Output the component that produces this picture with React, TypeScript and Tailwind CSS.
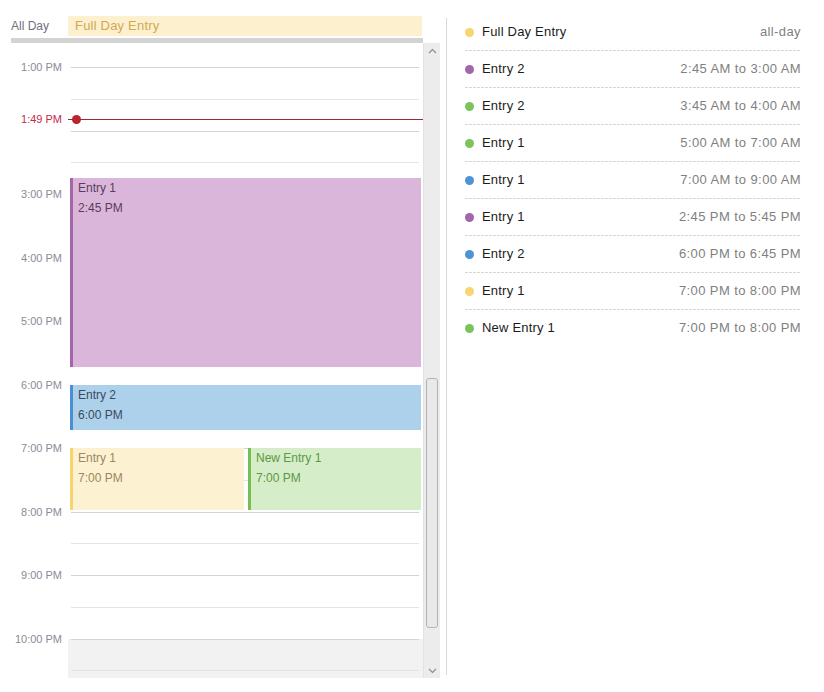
import React from "react";

type Ev = {
  title: string;
  time: string;
  top: number;
  height: number;
  left: number;
  width: number;
  bg: string;
  bar: string;
  text: string;
};

// positions inside the scrolling day view (1 hour = 63.5px)
const events: Ev[] = [
  { title: "Entry 1", time: "2:45 PM", top: 135, height: 189, left: 70, width: 351, bg: "bg-[#d8b3d8]/95", bar: "bg-[#a466a9]", text: "text-[#5b3c5c]" },
  { title: "Entry 2", time: "6:00 PM", top: 342, height: 45, left: 70, width: 351, bg: "bg-[#aacfea]/95", bar: "bg-[#4a8fd0]", text: "text-[#3a4a60]" },
  { title: "Entry 1", time: "7:00 PM", top: 405, height: 62, left: 70, width: 174, bg: "bg-[#fcf0cf]/95", bar: "bg-[#f6d36c]", text: "text-[#9c8760]" },
  { title: "New Entry 1", time: "7:00 PM", top: 405, height: 62, left: 248, width: 173, bg: "bg-[#d4ecc6]/95", bar: "bg-[#76be52]", text: "text-[#5d9842]" },
];

const agenda = [
  { dot: "bg-[#f7d56f]", title: "Full Day Entry", time: "all-day" },
  { dot: "bg-[#a466a9]", title: "Entry 2", time: "2:45 AM to 3:00 AM" },
  { dot: "bg-[#7cc45a]", title: "Entry 2", time: "3:45 AM to 4:00 AM" },
  { dot: "bg-[#7cc45a]", title: "Entry 1", time: "5:00 AM to 7:00 AM" },
  { dot: "bg-[#4e94d3]", title: "Entry 1", time: "7:00 AM to 9:00 AM" },
  { dot: "bg-[#a466a9]", title: "Entry 1", time: "2:45 PM to 5:45 PM" },
  { dot: "bg-[#4e94d3]", title: "Entry 2", time: "6:00 PM to 6:45 PM" },
  { dot: "bg-[#f7d56f]", title: "Entry 1", time: "7:00 PM to 8:00 PM" },
  { dot: "bg-[#7cc45a]", title: "New Entry 1", time: "7:00 PM to 8:00 PM" },
];

// half-hour slots from 1:00 PM to 10:30 PM; 2:00 is hidden by the now-marker
const slots = Array.from({ length: 20 }, (_, i) => {
  const h = 1 + Math.floor(i / 2);
  const full = i % 2 === 0;
  return { label: full && h !== 2 ? `${h}:00 PM` : "", full, off: h >= 10 };
});

const Chevron = ({ up }: { up?: boolean }) => (
  <svg width="9" height="6" viewBox="0 0 9 6" className="mx-auto">
    <path
      d={up ? "M1 5 L4.5 1.5 L8 5" : "M1 1 L4.5 4.5 L8 1"}
      fill="none"
      stroke="#8a8a8a"
      strokeWidth="1.1"
    />
  </svg>
);

const DayView = () => (
  <div className="flex h-[635px]">
    <div className="relative w-[423px] overflow-hidden">
      <div className="h-[24px]" />
      {slots.map((s, i) => (
        <div key={i} className="flex h-[31.75px]">
          <div className="relative w-[68px] pr-[6px] text-right">
            {s.label && (
              <span className="absolute right-[6px] -top-[7px] text-[11px] leading-[14px] text-[#8b8b96]">
                {s.label}
              </span>
            )}
          </div>
          <div className={`flex-1 ${s.off ? "bg-[#f2f2f2]" : ""}`}>
            <div className={`ml-[3px] mr-[4px] border-t ${s.full ? "border-[#d4d4d4]" : "border-[#e4e4e4]"}`} />
          </div>
        </div>
      ))}

      {/* current time marker */}
      <div className="absolute left-0 right-0 top-[69px] flex h-[14px] items-center">
        <span className="w-[62px] text-right text-[11px] leading-[14px] text-[#c42a48]">1:49 PM</span>
        <div className="relative ml-[6px] h-px flex-1 bg-[#9c2a2c]">
          <div className="absolute left-[4px] -top-[4px] h-[9px] w-[9px] rounded-full bg-[#b8252a]" />
        </div>
      </div>

      {events.map((e, i) => (
        <div
          key={i}
          className={`absolute flex ${e.bg}`}
          style={{ top: e.top, height: e.height, left: e.left, width: e.width }}
        >
          <div className={`w-[3px] shrink-0 ${e.bar}`} />
          <div className={`pl-[5px] text-[12px] leading-[20px] ${e.text}`}>
            <div>{e.title}</div>
            <div>{e.time}</div>
          </div>
        </div>
      ))}
    </div>

    <div className="flex w-[17px] flex-col border-l border-[#e2e2e2] bg-[#ececec]">
      <div className="mt-[5px]">
        <Chevron up />
      </div>
      <div className="mx-auto mt-[324px] h-[250px] w-[12px] rounded-[3px] border border-[#b4b4b4] bg-[#e9e9e9]" />
      <div className="flex-1" />
      <div className="mb-[4px]">
        <Chevron />
      </div>
    </div>
  </div>
);

export default function App() {
  return (
    <div className="flex h-[692px] w-[824px] bg-white font-['Liberation_Sans',Arial,sans-serif]">
      <div className="flex w-[440px] flex-col pt-4">
        <div className="flex h-[20px] items-center">
          <div className="w-[68px] pl-[11px] text-[12px] text-[#6f6f7f]">All Day</div>
          <div className="flex h-full w-[354px] items-center bg-[#fcf0cf] pl-[7px] text-[13px] tracking-[0.2px] text-[#d3a94f]">
            Full Day Entry
          </div>
        </div>
        <div className="ml-[11px] mt-[2px] h-[5px] w-[412px] bg-[#d3d3d3]" />
        <DayView />
      </div>

      <div className="ml-[6px] mt-[18px] h-[657px] w-px bg-[#d8d8d8]" />

      <div className="flex-1 pl-[18px] pr-[23px] pt-[14px]">
        {agenda.map((a, i) => (
          <div key={i}>
            <div className="flex h-[36px] items-center text-[13px]">
              <div className={`h-[9px] w-[9px] rounded-full ${a.dot}`} />
              <span className="ml-[8px] tracking-[0.2px] text-[#1b1b1b]">{a.title}</span>
              <span className="ml-auto tracking-[0.4px] text-[#7f7f7f]">{a.time}</span>
            </div>
            {i < agenda.length - 1 && (
              <div className="h-px bg-[repeating-linear-gradient(90deg,#d6d6d6_0_3px,transparent_3px_4px)]" />
            )}
          </div>
        ))}
      </div>
    </div>
  );
}
